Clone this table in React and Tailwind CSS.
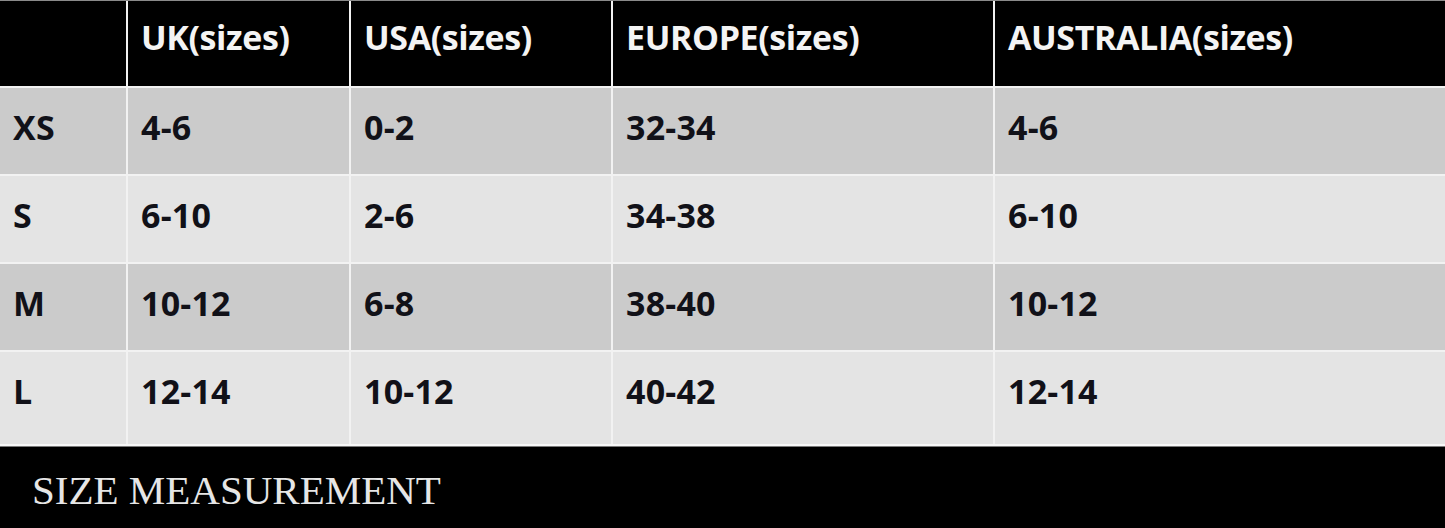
import React from "react";

const headers = ["", "UK(sizes)", "USA(sizes)", "EUROPE(sizes)", "AUSTRALIA(sizes)"];

const rows = [
  { size: "XS", uk: "4-6", usa: "0-2", eu: "32-34", au: "4-6", bg: "bg-[#cbcbcb]" },
  { size: "S", uk: "6-10", usa: "2-6", eu: "34-38", au: "6-10", bg: "bg-[#e4e4e4]" },
  { size: "M", uk: "10-12", usa: "6-8", eu: "38-40", au: "10-12", bg: "bg-[#cbcbcb]" },
  { size: "L", uk: "12-14", usa: "10-12", eu: "40-42", au: "12-14", bg: "bg-[#e4e4e4]" },
];

const cols = "grid grid-cols-[126px_221px_260px_380px_1fr] gap-x-[2px]";

export default function App() {
  return (
    <div className="w-[1445px] h-[528px] bg-[#f2f2f2] flex flex-col overflow-hidden font-['Open_Sans',sans-serif]">
      <div className="border-t border-[#8a8a8a]" />
      {/* header */}
      <div className={`${cols} h-[85px]`}>
        {headers.map((h, i) => (
          <div
            key={i}
            className="bg-black text-[#f4f4f4] font-bold text-[34px] tracking-[-0.4px] pl-[13px] pt-[11px]"
          >
            {h}
          </div>
        ))}
      </div>

      {/* rows */}
      <div className="flex flex-col gap-y-[2px] mt-[2px]">
        {rows.map((r, i) => (
          <div key={r.size} className={`${cols} ${i === 3 ? "h-[92px]" : "h-[86px]"}`}>
            {[r.size, r.uk, r.usa, r.eu, r.au].map((v, j) => (
              <div
                key={j}
                className={`${r.bg} text-[#111118] font-bold text-[34px] tracking-[0.2px] pl-[13px] pt-[14px]`}
              >
                {v}
              </div>
            ))}
          </div>
        ))}
      </div>

      <div className="h-[3px] bg-[#f8f8f8] border-b border-[#7a7a7a]" />

      {/* footer */}
      <div className="flex-1 bg-black flex items-center pl-[32px] pt-[5px]">
        <span className="text-[#e6e6e6] text-[41px] font-['Liberation_Serif',serif] leading-none">
          SIZE MEASUREMENT
        </span>
      </div>
    </div>
  );
}
